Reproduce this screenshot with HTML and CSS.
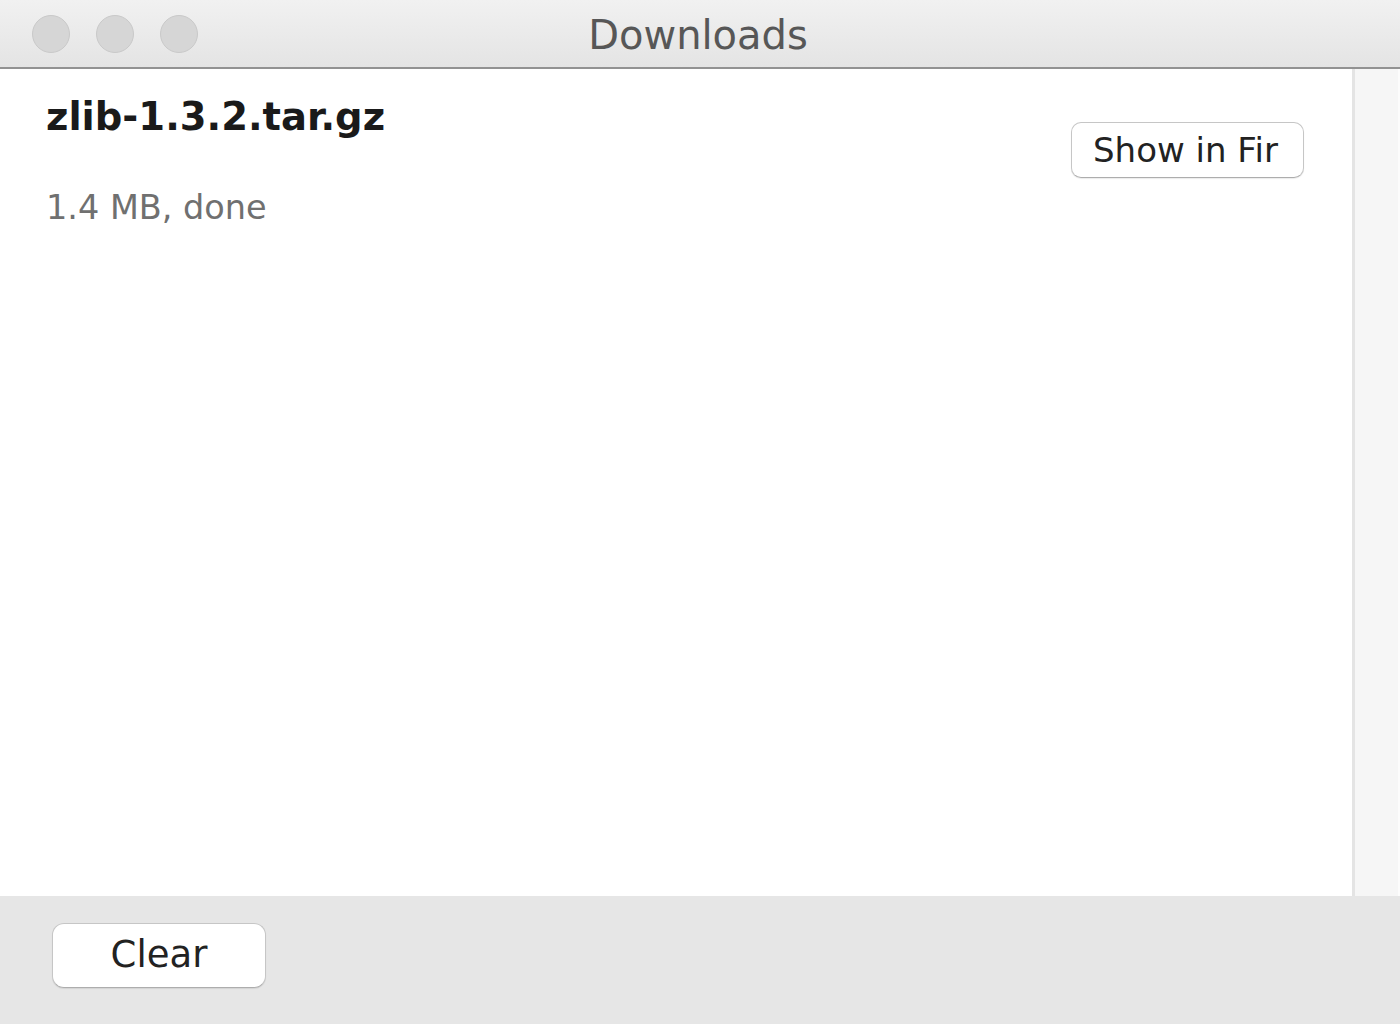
FILE: index.html
```html
<!DOCTYPE html>
<html>
<head>
<meta charset="utf-8">
<title>Downloads</title>
<link rel="stylesheet" href="styles.css">
</head>
<body>
<div class="window">
  <div class="titlebar">
    <div class="lights">
      <span class="light"></span>
      <span class="light"></span>
      <span class="light"></span>
    </div>
    <div class="title">Downloads</div>
  </div>
  <div class="content">
    <div class="list">
      <div class="item">
        <div class="info">
          <div class="name">zlib-1.3.2.tar.gz</div>
          <div class="status">1.4 MB, done</div>
        </div>
        <button class="btn show">Show in Fir</button>
      </div>
    </div>
    <div class="scrollbar"></div>
  </div>
  <div class="footer">
    <button class="btn clear">Clear</button>
  </div>
</div>
</body>
</html>
```

FILE: styles.css
```css
html, body {
  margin: 0;
  padding: 0;
  background: #ffffff;
}
body {
  font-family: "DejaVu Sans", "Liberation Sans", sans-serif;
}
.window {
  width: 1400px;
  height: 1024px;
  display: flex;
  flex-direction: column;
  overflow: hidden;
}
.titlebar {
  height: 67px;
  flex: none;
  position: relative;
  background: linear-gradient(#f1f1f1, #e4e4e4);
  border-bottom: 2px solid #929292;
  display: flex;
  align-items: center;
  justify-content: center;
}
.lights {
  position: absolute;
  left: 32px;
  top: 15px;
  display: flex;
  gap: 26px;
}
.light {
  width: 36px;
  height: 36px;
  border-radius: 50%;
  background: #d6d6d6;
  border: 1px solid #c9c9c9;
}
.title {
  font-size: 40px;
  color: #575757;
  margin-left: -4px;
  padding-top: 2px;
}
.content {
  flex: 1;
  display: flex;
  min-height: 0;
}
.list {
  flex: 1;
  background: #ffffff;
}
.item {
  display: flex;
  justify-content: space-between;
  align-items: flex-start;
  padding: 26px 48px 0 46px;
}
.name {
  font-size: 38.5px;
  line-height: 44px;
  font-weight: bold;
  color: #1a1a1a;
}
.status {
  margin-top: 49px;
  font-size: 33.5px;
  line-height: 40px;
  color: #707070;
}
.btn {
  font-family: "DejaVu Sans", "Liberation Sans", sans-serif;
  background: #ffffff;
  border: 1px solid #c6c6c6;
  border-bottom-color: #adadad;
  color: #222222;
  box-shadow: 0 1px 1px rgba(0,0,0,0.08);
  padding: 0;
  margin: 0;
}
.show {
  margin-top: 27px;
  width: 233px;
  height: 56px;
  border-radius: 10px;
  font-size: 34px;
  text-align: left;
  padding-left: 21px;
  white-space: nowrap;
  overflow: hidden;
}
.scrollbar {
  width: 43px;
  flex: none;
  background: #f6f6f6;
  border-left: 3px solid #e4e4e4;
  border-right: 2px solid #fcfcfc;
}
.footer {
  height: 128px;
  flex: none;
  background: #e6e6e6;
  padding: 27px 0 0 52px;
  box-sizing: border-box;
}
.clear {
  width: 214px;
  height: 65px;
  border-radius: 12px;
  font-size: 37px;
  text-align: center;
  padding-bottom: 3px;
}
```
